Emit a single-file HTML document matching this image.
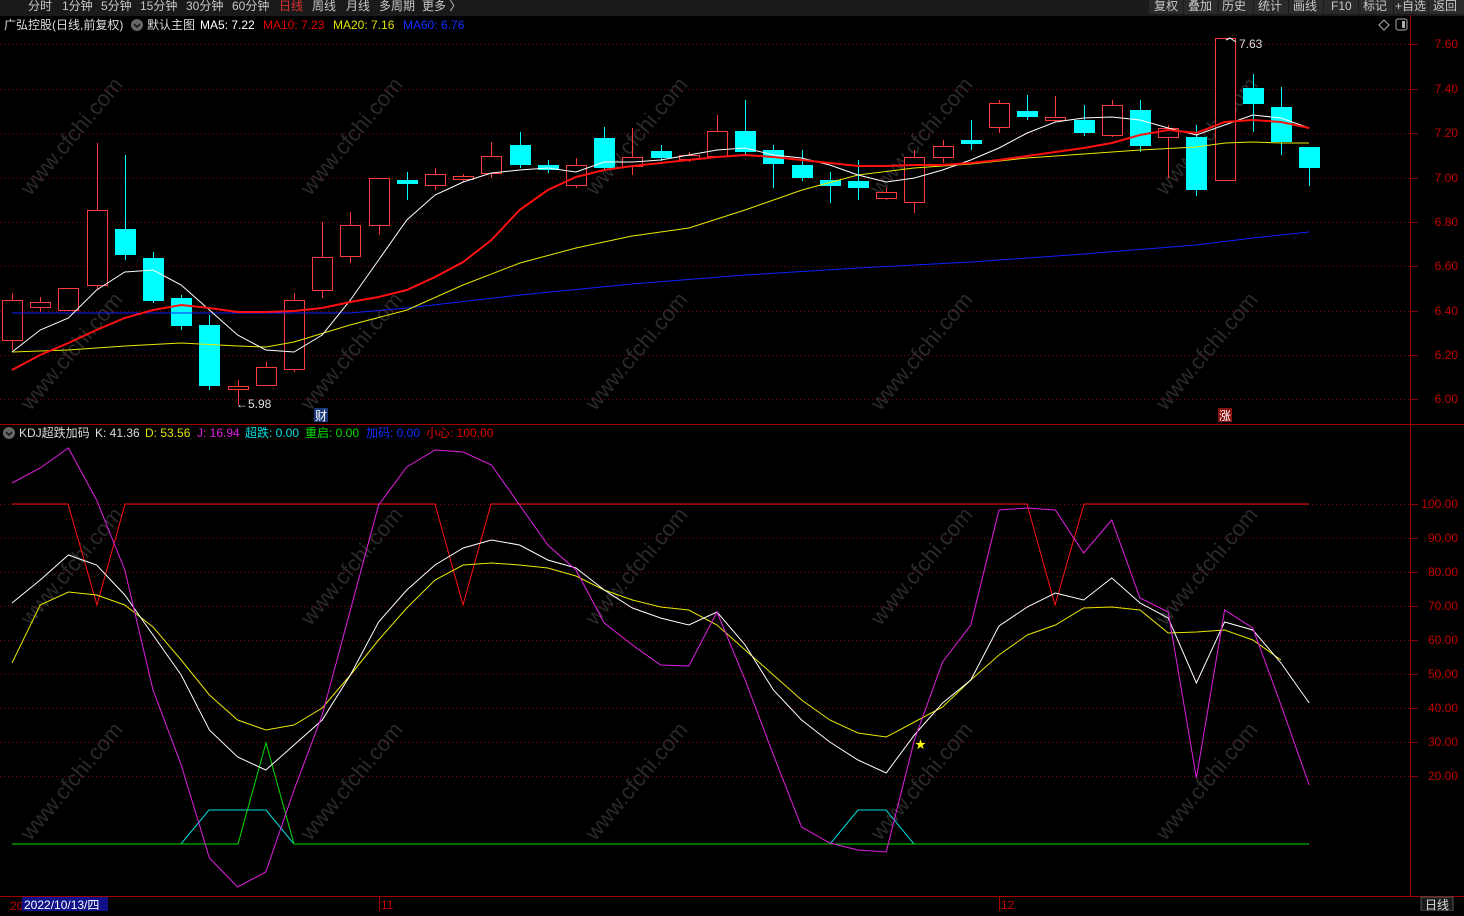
<!DOCTYPE html>
<html><head><meta charset="utf-8"><style>
body{margin:0;background:#000;width:1464px;height:911px;overflow:hidden;font-family:"Liberation Sans","Noto Sans CJK SC",sans-serif}
svg text{font-family:"Liberation Sans","Noto Sans CJK SC",sans-serif}
</style></head><body>
<svg id="s" width="1464" height="911" xmlns="http://www.w3.org/2000/svg">
<rect width="1464" height="911" fill="#000"/>
<g id="wm" font-size="22" fill="#2a2a2a"></g>
<rect width="1464" height="14" fill="#1a1a1a"/>
<g font-size="12" fill="#c8c8c8">
<text x="28" y="10">分时</text><text x="62" y="10">1分钟</text><text x="101" y="10">5分钟</text><text x="140" y="10">15分钟</text><text x="186" y="10">30分钟</text><text x="232" y="10">60分钟</text>
<text x="279" y="10" fill="#e03030">日线</text><text x="312" y="10">周线</text><text x="346" y="10">月线</text><text x="379" y="10">多周期</text><text x="422" y="10">更多 〉</text>
</g>
<g font-size="12" fill="#c8c8c8">
<rect x="1149" y="0" width="34" height="14" fill="#2a2a2a"/><text x="1154" y="10">复权</text>
<rect x="1184" y="0" width="34" height="14" fill="#2a2a2a"/><text x="1188" y="10">叠加</text>
<rect x="1219" y="0" width="34" height="14" fill="#2a2a2a"/><text x="1222" y="10">历史</text>
<rect x="1254" y="0" width="34" height="14" fill="#2a2a2a"/><text x="1258" y="10">统计</text>
<rect x="1289" y="0" width="34" height="14" fill="#2a2a2a"/><text x="1293" y="10">画线</text>
<rect x="1324" y="0" width="34" height="14" fill="#2a2a2a"/><text x="1331" y="10">F10</text>
<rect x="1359" y="0" width="34" height="14" fill="#2a2a2a"/><text x="1363" y="10">标记</text>
<rect x="1394" y="0" width="34" height="14" fill="#2a2a2a"/><text x="1395" y="10">+自选</text>
<rect x="1429" y="0" width="35" height="14" fill="#2a2a2a"/><text x="1433" y="10">返回</text>
</g>
<g font-size="12">
<text x="4" y="29" fill="#ddd">广弘控股(日线,前复权)</text>
<circle cx="137" cy="25" r="6" fill="#666"/><path d="M134 24l3 3 3-3" stroke="#111" fill="none" stroke-width="1.5"/>
<text x="147" y="29" fill="#ddd">默认主图</text>
<text x="200" y="29" fill="#fff">MA5: 7.22</text>
<text x="263" y="29" fill="#e00000">MA10: 7.23</text>
<text x="333" y="29" fill="#e0e000">MA20: 7.16</text>
<text x="403" y="29" fill="#1030ff">MA60: 6.76</text>
<circle cx="9" cy="433" r="6" fill="#666"/><path d="M6 432l3 3 3-3" stroke="#111" fill="none" stroke-width="1.5"/>
<text x="19" y="437" fill="#ddd">KDJ超跌加码</text>
<text x="95" y="437" fill="#ddd">K: 41.36</text>
<text x="145" y="437" fill="#e0e000">D: 53.56</text>
<text x="197" y="437" fill="#e020e0">J: 16.94</text>
<text x="245" y="437" fill="#00e0e0">超跌: 0.00</text>
<text x="305" y="437" fill="#00e000">重启: 0.00</text>
<text x="366" y="437" fill="#1030ff">加码: 0.00</text>
<text x="426" y="437" fill="#e00000">小心: 100.00</text>
</g>
<path d="M1379 25l5-5 5 5-5 5z" stroke="#aaa" fill="none"/>
<rect x="1396" y="19" width="11" height="11" rx="2" stroke="#aaa" fill="none"/><rect x="1402" y="21" width="3" height="7" fill="#aaa"/>
<line x1="0" y1="15" x2="1464" y2="15" stroke="#333"/>
<line x1="1410.5" y1="15" x2="1410.5" y2="896" stroke="#a00000"/>
<line x1="0" y1="424.5" x2="1464" y2="424.5" stroke="#a00000"/>
<line x1="0" y1="896.5" x2="1464" y2="896.5" stroke="#a00000"/>
<g id="grid" stroke="#8a0000" stroke-dasharray="1,3"></g>
<g id="lab" font-size="12" fill="#c00000" text-anchor="end"></g>
<g id="c"></g>
<g id="l" fill="none"></g>
<g font-size="12">
<text x="236" y="408" fill="#ddd">←5.98</text>
<rect x="314" y="408" width="14" height="14" fill="#1c3a7a"/><text x="315" y="420" fill="#fff">财</text>
<rect x="1218" y="408" width="14" height="14" fill="#8a1010"/><text x="1219" y="420" fill="#fff">涨</text>
<text x="1239" y="48" fill="#ddd">7.63</text>
<path d="M1226 40l4-2 6 4" stroke="#fff" fill="none"/>
<text x="915" y="748" fill="#ff0" font-size="11">★</text>
<text x="10" y="910" fill="#c00000">20</text>
<rect x="22" y="897" width="86" height="14" fill="#10108a"/><text x="24" y="909" fill="#fff">2022/10/13/四</text>
<line x1="379.5" y1="896" x2="379.5" y2="911" stroke="#a00000"/><text x="381" y="909" fill="#c00000">11</text>
<line x1="999.5" y1="896" x2="999.5" y2="911" stroke="#a00000"/><text x="1001" y="909" fill="#c00000">12</text>
<rect x="1421" y="897" width="32" height="14" fill="#1a1a1a" stroke="#555"/><text x="1425" y="909" fill="#ddd">日线</text>
</g>
</svg>
<script>
var NS="http://www.w3.org/2000/svg";
function el(p,t,a){var e=document.createElementNS(NS,t);for(var k in a)e.setAttribute(k,a[k]);document.getElementById(p).appendChild(e);return e;}
[60,340,625,910,1195].forEach(function(x){[130,345,560,775].forEach(function(y){var t=el("wm","text",{x:x-70,y:y+20,transform:"rotate(-50 "+x+" "+y+")"});t.textContent="www.cfchi.com";});});
var g=[44,89,133,178,222,266,311,355,399],pl=["7.60","7.40","7.20","7.00","6.80","6.60","6.40","6.20","6.00"];
g.forEach(function(y,i){el("grid","line",{x1:0,x2:1410,y1:y+.5,y2:y+.5});el("grid","line",{x1:1410,x2:1418,y1:y+.5,y2:y+.5,"stroke-dasharray":"none"});var t=el("lab","text",{x:1458,y:y+4});t.textContent=pl[i];});
var b=[504,538,572,606,640,674,708,742,776],bl=["100.00","90.00","80.00","70.00","60.00","50.00","40.00","30.00","20.00"];
b.forEach(function(y,i){el("grid","line",{x1:0,x2:1410,y1:y+.5,y2:y+.5});el("grid","line",{x1:1410,x2:1418,y1:y+.5,y2:y+.5,"stroke-dasharray":"none"});var t=el("lab","text",{x:1458,y:y+4});t.textContent=bl[i];});
var C=[[1,300,340,293,350],[1,302,307,297,312],[1,288,310,288,310],[1,210,285,143,290],[0,229,255,155,260],[0,258,301,252,303],[0,298,326,295,330],[0,325,386,315,390],[1,386,389,380,405],[1,367,385,362,386],[1,300,369,293,372],[1,257,290,222,298],[1,225,256,212,263],[1,178,225,178,235],[0,180,184,172,200],[1,174,185,168,190],[1,176,179,174,182],[1,156,173,142,178],[0,145,165,132,168],[0,165,170,160,173],[1,165,185,158,188],[0,138,168,127,170],[1,157,166,128,175],[0,151,158,145,161],[1,155,159,152,162],[1,131,156,115,158],[0,131,152,100,155],[0,150,164,145,188],[0,165,178,150,181],[0,180,186,172,203],[0,181,188,160,200],[1,192,198,188,200],[1,157,202,150,213],[1,146,157,140,163],[0,140,144,120,150],[1,103,127,100,133],[0,111,117,95,120],[1,117,120,96,122],[0,120,133,105,136],[1,105,135,100,137],[0,110,146,100,152],[1,128,137,125,178],[0,137,190,125,196],[1,38,180,38,180],[0,88,104,74,132],[0,107,142,87,155],[0,147,168,147,186]];
C.forEach(function(c,i){var x=Math.round(12+i*28.2);var col=c[0]?"#ff3a3a":"#00ffff";
el("c","line",{x1:x+.5,x2:x+.5,y1:c[3],y2:c[1],stroke:col});el("c","line",{x1:x+.5,x2:x+.5,y1:c[2],y2:c[4],stroke:col});
if(c[0])el("c","rect",{x:x-9.5,y:c[1]+.5,width:20,height:Math.max(1,c[2]-c[1]),fill:"#000",stroke:col});
else el("c","rect",{x:x-10,y:c[1],width:21,height:Math.max(2,c[2]-c[1]),fill:col});});
function L(pts,col,w){el("l","polyline",{points:pts,stroke:col,"stroke-width":w||1});}
function X(a){return a.map(function(y,i){return (12+i*28.2)+","+y}).join(" ");}
L("12,313 350,313 407,308 520,295 632,284 745,275 858,268 971,262 1084,254 1196,245 1253,238 1309,232","#1020ff");
L("12,352 68,350 125,346 181,343 238,346 266,347 294,342 350,325 407,310 463,285 520,263 576,248 632,236 689,228 745,210 802,190 858,175 914,168 971,164 1027,158 1084,154 1140,150 1196,147 1225,143 1253,142 1281,143 1309,143","#e8e800");
L(X([352,330,318,290,272,270,285,310,335,350,352,335,300,260,220,195,182,173,170,168,172,162,162,160,155,150,148,155,158,165,175,182,178,170,160,148,133,122,118,117,120,128,135,125,115,118,128]),"#fff");
L(X([370,355,343,330,318,310,305,308,312,312,311,308,302,297,290,277,262,240,210,190,177,170,166,163,160,157,155,157,160,163,166,166,165,165,163,160,156,152,148,143,135,130,133,122,120,122,128]),"#ff1010",2);
L("12,844 181,844 209,810 266,810 294,844 830,844 858,810 886,810 914,844 1309,844","#00e0e0");
L("12,844 238,844 266,743 294,844 1309,844","#00e000");
L("12,504 68,504 97,605 125,504 435,504 463,605 491,504 1027,504 1055,605 1084,504 1309,504","#ff1010");
L(X([663,605,592,595,605,627,660,695,720,730,725,708,675,640,608,580,565,563,565,568,576,590,600,607,610,625,650,675,700,720,733,737,722,707,680,655,635,625,608,607,610,633,632,630,640,660]),"#e8e800");
L(X([603,580,555,565,595,635,675,730,757,770,745,720,675,622,590,565,548,540,545,560,568,590,608,618,625,612,645,690,720,742,760,773,735,703,680,626,607,593,600,578,603,618,683,622,630,663,703]),"#fff");
L(X([483,468,448,500,570,690,765,858,887,872,790,715,610,505,467,450,452,465,505,545,570,623,645,665,666,612,680,755,827,843,850,852,740,662,625,510,508,510,553,520,598,612,778,610,628,705,785]),"#e020e0");
</script>
</body></html>
